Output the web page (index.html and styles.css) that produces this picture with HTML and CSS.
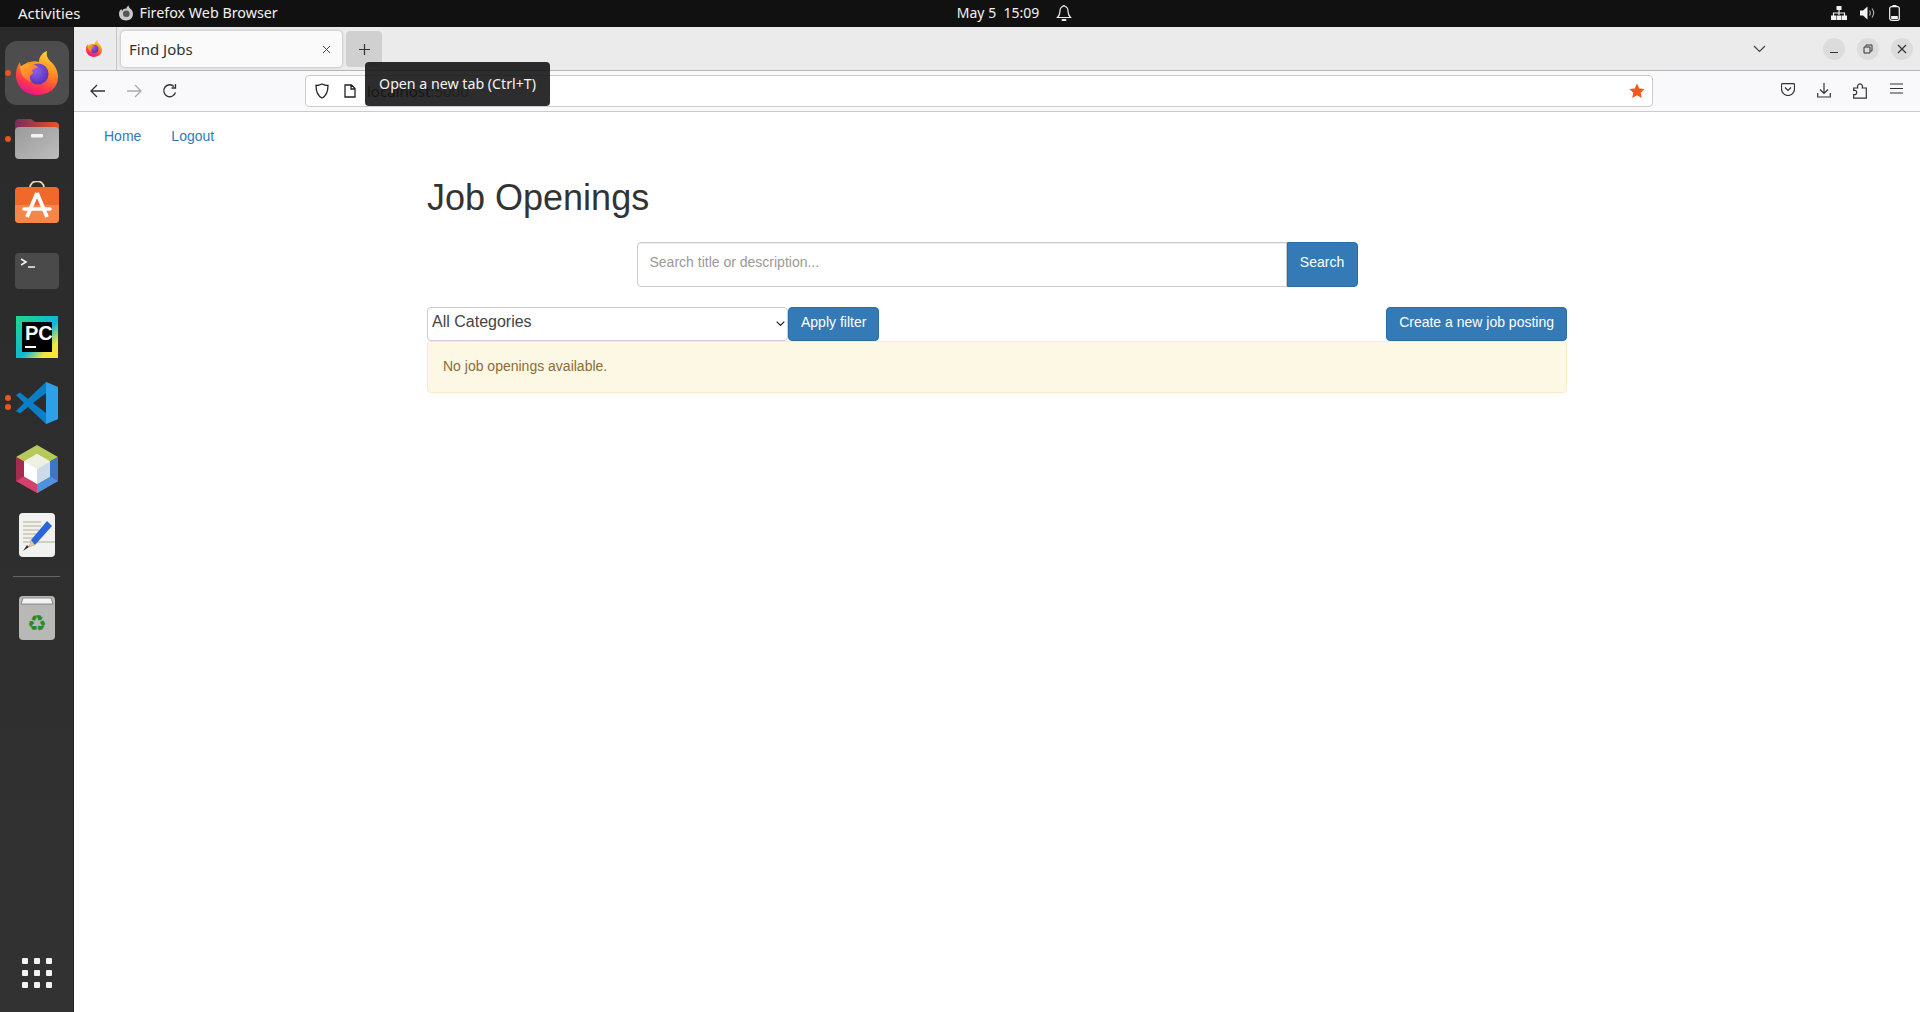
FILE: index.html
```html
<!DOCTYPE html>
<html>
<head>
	<meta charset="utf-8">
	<title>Find Jobs</title>
	<link rel="stylesheet" href="styles.css">
</head>
<body>
	<svg class="defs" width="0" height="0">
		<defs>
			<linearGradient id="fxBody" x1="0.7" y1="0" x2="0.3" y2="1">
				<stop offset="0" stop-color="#ffd53a"/>
				<stop offset="0.4" stop-color="#ff8a1f"/>
				<stop offset="0.75" stop-color="#ff3750"/>
				<stop offset="1" stop-color="#e3128c"/>
			</linearGradient>
			<linearGradient id="fxArm" x1="0" y1="0" x2="1" y2="1">
				<stop offset="0" stop-color="#ffb52e"/>
				<stop offset="1" stop-color="#ff5a2a"/>
			</linearGradient>
			<radialGradient id="fxBall" cx="0.4" cy="0.35" r="0.8">
				<stop offset="0" stop-color="#8f5fe8"/>
				<stop offset="1" stop-color="#4a2bb0"/>
			</radialGradient>
			<symbol id="firefox" viewBox="0 0 42 44">
				<path d="M21 44C9 44 0 35 0 24c0-5 1-9 4-13 0 2 1 4 2 5 2-3 5-5 8-5 3-1 6-1 9 0 0-5 3-9 8-11-1 3 0 7 3 10 5 4 8 10 8 16 0 11-9 18-21 18z" fill="url(#fxBody)"/>
				<circle cx="22" cy="23" r="10.5" fill="url(#fxBall)"/>
				<path d="M4 16c3-3 7-4 11-3 4 0 6 2 7 4-3 0-5 1-6 3 2 1 1 3-1 4-2 2-1 5 1 7-6-1-11-6-12-15z" fill="url(#fxArm)"/>
			</symbol>
			<linearGradient id="folderTop" x1="0" y1="0" x2="1" y2="0">
				<stop offset="0" stop-color="#7a2a5c"/>
				<stop offset="1" stop-color="#e4551f"/>
			</linearGradient>
			<linearGradient id="folderBody" x1="0" y1="0" x2="1" y2="1">
				<stop offset="0" stop-color="#9a9a9a"/>
				<stop offset="1" stop-color="#bdbdbd"/>
			</linearGradient>
			<linearGradient id="pcBg" x1="0" y1="0" x2="1" y2="1">
				<stop offset="0" stop-color="#21d789"/>
				<stop offset="0.55" stop-color="#0cb8d8"/>
				<stop offset="0.8" stop-color="#f5e642"/>
			</linearGradient>
		</defs>
	</svg>

	<header class="topbar">
		<div class="topbar-left">
			<span class="activities">Activities</span>
			<span class="app-menu">
				<svg class="app-menu-icon" viewBox="0 0 16 16"><path d="M8 15.500C3.800 15.500 1 12.600 1 9c0-2.500 1.200-4.200 2.500-5 0 1 .4 1.500.8 1.900C5 4 7 3.300 8.500 3.700 8.500 2.200 9.500.8 10.800.5c-.3 1.400.4 2.400 1.600 3.300 1.600 1.300 2.600 3 2.600 5.200 0 3.700-2.900 6.500-7 6.500z" fill="#c9c9c9"/><circle cx="8.300" cy="8.800" r="3.300" fill="#555"/></svg>
				Firefox Web Browser
			</span>
		</div>
		<div class="clock">
			<span>May 5&nbsp;&nbsp;15:09</span>
			<svg class="bell" viewBox="0 0 16 18"><path d="M8 1.500c-.6 0-1 .4-1 1C4.800 3 4 5 4 7c0 3-1 5-2.500 6.500h13C13 12 12 10 12 7c0-2-.8-4-3-4.500 0-.6-.4-1-1-1z" fill="none" stroke="#eee" stroke-width="1.200"/><rect x="5.500" y="15" width="5" height="2" rx="1" fill="#eee"/></svg>
		</div>
		<div class="tray">
			<svg width="16" height="14" viewBox="0 0 16 14"><path d="M5.500 0h5v4h-5zM0 9.500h5V14H0zM11 9.500h5V14h-5zM5.500 9.500h5V14h-5z" fill="#f2f2f2"/><path d="M8 4v5M2.500 10V7h11v3" fill="none" stroke="#f2f2f2" stroke-width="1.200"/></svg>
			<svg width="16" height="14" viewBox="0 0 16 14"><path d="M0 4.500h3L7.500.5v13L3 9.500H0z" fill="#f2f2f2"/><path d="M9.500 4.500c1 1.500 1 3.500 0 5M12 2.500c2 2.700 2 6.300 0 9" fill="none" stroke="#aaa" stroke-width="1.200"/></svg>
			<svg width="11" height="16" viewBox="0 0 11 16"><rect x=".7" y="1.700" width="9.600" height="13.600" rx="2" fill="none" stroke="#f2f2f2" stroke-width="1.200"/><rect x="3.500" y="0" width="4" height="1.500" fill="#f2f2f2"/><rect x="2.200" y="11" width="6.600" height="3" fill="#f2f2f2"/></svg>
		</div>
	</header>

	<div class="desktop">
		<nav class="dock">
			<div class="dock-slot dock-active">
				<span class="dock-dot"></span>
				<svg width="42" height="44"><use href="#firefox"/></svg>
			</div>
			<div class="dock-slot">
				<span class="dock-dot"></span>
				<svg width="44" height="40" viewBox="0 0 44 40">
					<path d="M0 4q0-4 4-4h12l4 3h20q4 0 4 4v12H0z" fill="url(#folderTop)"/>
					<rect y="8" width="44" height="32" rx="4" fill="url(#folderBody)"/>
					<rect x="16" y="15" width="12" height="3.500" rx="1" fill="#f2f2f2"/>
				</svg>
			</div>
			<div class="dock-slot dock-slot-store">
				<svg width="44" height="42" viewBox="0 0 44 42">
					<path d="M15 7c0-9 14-9 14 0" fill="none" stroke="#f3d6a8" stroke-width="1.800"/>
					<rect y="6" width="44" height="36" rx="4" fill="#f0692a"/>
					<path d="M0 24h44v14q0 4-4 4H4q-4 0-4-4z" fill="#f58645"/>
					<path d="M22 12L12 36M22 12l10 24" fill="none" stroke="#fff" stroke-width="3.800"/>
					<path d="M9 28h26" fill="none" stroke="#fff" stroke-width="3.500" stroke-linecap="round"/>
				</svg>
			</div>
			<div class="dock-slot">
				<svg width="44" height="36" viewBox="0 0 44 36">
					<rect width="44" height="36" rx="4" fill="#4a4a4a"/>
					<path d="M6 6l5 3-5 3M13 14h7" fill="none" stroke="#f2f2f2" stroke-width="1.600"/>
				</svg>
			</div>
			<div class="dock-slot">
				<svg width="42" height="42" viewBox="0 0 42 42">
					<rect width="42" height="42" fill="url(#pcBg)"/>
					<rect x="6" y="6" width="30" height="30" fill="#000"/>
					<text x="9" y="24" class="pc-text">PC</text>
					<rect x="9" y="30" width="11" height="2" fill="#fff"/>
				</svg>
			</div>
			<div class="dock-slot">
				<span class="dock-dot dock-dot-up"></span>
				<span class="dock-dot dock-dot-down"></span>
				<svg width="42" height="42" viewBox="0 0 42 42">
					<path d="M30 0L12 17 4 10.500 0 13l8 8-8 8 4 2.500 8-6.500L30 42l12-5V5zm0 11v20L17 21z" fill="#0a7fc7"/>
					<path d="M30 0l12 5v32l-12 5z" fill="#2da0e8"/>
				</svg>
			</div>
			<div class="dock-slot">
				<svg width="42" height="48" viewBox="0 0 42 48">
					<path d="M21 0l21 12-21 12L0 12z" fill="#b7c95a"/>
					<path d="M42 12v24L21 48V24z" fill="#3b78c4"/>
					<path d="M0 12v24l21 12V24z" fill="#a32c50"/>
					<path d="M0 36l21-12 21 12-21 12z" fill="#d6416b"/>
					<path d="M42 36l-21-12v24z" fill="#4c92dc"/>
					<path d="M21 9l13 7.500v15L21 39 8 31.500v-15z" fill="#fff"/>
					<path d="M21 9l13 7.500L21 24 8 16.500z" fill="#eef0e2"/>
					<path d="M34 16.500v15L21 39V24z" fill="#cddbe8"/>
				</svg>
			</div>
			<div class="dock-slot">
				<svg width="36" height="44" viewBox="0 0 36 44">
					<rect width="36" height="44" rx="4" fill="#f1f1ef"/>
					<path d="M4 9h18M4 13h18M4 17h16M4 21h14M4 25h12M4 29h32" stroke="#c9c3b3" stroke-width="1.500"/>
					<path d="M28 8l5 5-17 19-6 2 2-7z" fill="#2a66d8"/>
					<path d="M12 27l4 5-6 2z" fill="#eec48a"/>
					<path d="M4 38l6-4-2-2z" fill="#333"/>
				</svg>
			</div>
			<div class="dock-sep"></div>
			<div class="dock-slot">
				<svg width="36" height="44" viewBox="0 0 36 44">
					<rect width="36" height="44" rx="4" fill="#b8b8b6"/>
					<path d="M4 2h28l2 6H2z" fill="#f3f3f3" stroke="#777" stroke-width=".8"/>
					<text x="18" y="35" class="recycle">♻</text>
				</svg>
			</div>
			<div class="dock-slot dock-grid-slot">
				<div class="app-grid">
					<i></i><i></i><i></i><i></i><i></i><i></i><i></i><i></i><i></i>
				</div>
			</div>
		</nav>

		<div class="browser">
			<div class="tabbar">
				<div class="tab-firefox">
					<svg width="16" height="17"><use href="#firefox"/></svg>
				</div>
				<div class="tab">
					<span>Find Jobs</span>
					<svg class="tab-close" width="9" height="9" viewBox="0 0 9 9"><path d="M1 1l7 7M8 1L1 8" stroke="#444" stroke-width="1"/></svg>
				</div>
				<div class="newtab">
					<svg width="13" height="13" viewBox="0 0 13 13"><path d="M6.500 1v11M1 6.500h11" stroke="#333" stroke-width="1.200"/></svg>
				</div>
				<div class="tabbar-right">
					<svg class="tabs-menu" width="13" height="8" viewBox="0 0 13 8"><path d="M1 1l5.500 5.500L12 1" fill="none" stroke="#444" stroke-width="1.200"/></svg>
					<span class="winbtn"><svg width="10" height="10" viewBox="0 0 10 10"><path d="M1 8.500h8" stroke="#333" stroke-width="1"/></svg></span>
					<span class="winbtn"><svg width="10" height="10" viewBox="0 0 10 10"><path d="M3 2.500V1h6v6H7.500M1 3h6v6H1z" fill="none" stroke="#333" stroke-width="1"/></svg></span>
					<span class="winbtn"><svg width="10" height="10" viewBox="0 0 10 10"><path d="M1 1l8 8M9 1L1 9" stroke="#333" stroke-width="1.200"/></svg></span>
				</div>
			</div>

			<div class="toolbar">
				<div class="nav-buttons">
					<svg width="16" height="14" viewBox="0 0 16 14"><path d="M7 1L1 7l6 6M1 7h14" fill="none" stroke="#333" stroke-width="1.300"/></svg>
					<svg width="16" height="14" viewBox="0 0 16 14"><path d="M9 1l6 6-6 6M15 7H1" fill="none" stroke="#aaa" stroke-width="1.300"/></svg>
					<svg width="16" height="16" viewBox="0 0 16 16"><path d="M13.500 9.500A6 6 0 1 1 12 3.500M13.500 1v4h-4" fill="none" stroke="#333" stroke-width="1.300"/></svg>
				</div>
				<div class="urlbar">
					<svg width="14" height="16" viewBox="0 0 14 16"><path d="M7 1c2 1 4 1.500 6 1.500C13 9 11 13 7 15 3 13 1 9 1 2.500 3 2.500 5 2 7 1z" fill="none" stroke="#222" stroke-width="1.300"/></svg>
					<svg class="url-doc" width="12" height="14" viewBox="0 0 12 14"><path d="M1 1h6.500L11 4.500V13H1zM7 1v4h4" fill="none" stroke="#222" stroke-width="1.300"/></svg>
					<span class="url-text">localhost<span class="url-port">:5000</span></span>
					<svg class="url-star" width="16" height="16" viewBox="0 0 16 16"><path d="M8 .5l2.300 5 5.300.6-3.900 3.600 1.100 5.300L8 12.300 3.200 15l1.100-5.300L.4 6.100l5.300-.6z" fill="#f2591f"/></svg>
				</div>
				<div class="toolbar-icons">
					<span><svg width="14" height="13" viewBox="0 0 14 13"><path d="M1.500.7h11q1 0 1 1V6a6.500 6.500 0 0 1-13 0V1.700q0-1 1-1z" fill="none" stroke="#333" stroke-width="1.200"/><path d="M4 4.500l3 3 3-3" fill="none" stroke="#333" stroke-width="1.200"/></svg></span>
					<span><svg width="14" height="15" viewBox="0 0 14 15"><path d="M7 0v10M3 6.500l4 4 4-4M.7 10v4h12.600v-4" fill="none" stroke="#333" stroke-width="1.200"/></svg></span>
					<span><svg width="14" height="16" viewBox="0 0 14 16"><path d="M.7 5h4C4 3 5 .8 7 .8S10 3 9.300 5h4v10.200H.7v-3.700c2 .6 3-.6 3-2s-1-2.600-3-2z" fill="none" stroke="#333" stroke-width="1.200"/></svg></span>
					<span><svg width="13" height="11" viewBox="0 0 13 11"><path d="M0 1h13M0 5.500h13M0 10h13" stroke="#333" stroke-width="1.200"/></svg></span>
				</div>
			</div>

			<div class="tooltip">Open a new tab (Ctrl+T)</div>

			<main class="page">
				<ul class="nav-pills">
					<li><a href="#">Home</a></li>
					<li><a href="#">Logout</a></li>
				</ul>
				<div class="container">
					<h1>Job Openings</h1>
					<form class="search-form">
						<input class="search-input" type="text" placeholder="Search title or description...">
						<button class="btn btn-search" type="button">Search</button>
					</form>
					<div class="filter-row">
						<div class="filter-left">
							<div class="select-wrap">
								<select class="category-select">
									<option>All Categories</option>
								</select>
								<svg class="select-arrow" width="9" height="6" viewBox="0 0 9 6"><path d="M.7.7l3.800 3.800L8.300.7" fill="none" stroke="#222" stroke-width="1.200"/></svg>
							</div>
							<button class="btn" type="button">Apply filter</button>
						</div>
						<button class="btn" type="button">Create a new job posting</button>
					</div>
					<div class="alert">No job openings available.</div>
				</div>
			</main>
		</div>
	</div>
</body>
</html>
```

FILE: styles.css
```css
* {
	box-sizing: border-box;
}
html, body {
	margin: 0;
	height: 100%;
	overflow: hidden;
}
body {
	display: flex;
	flex-direction: column;
	font-family: 'Liberation Sans', Arial, sans-serif;
	font-size: 14px;
	line-height: 20px;
	color: #333;
	background-color: #fff;
}
.defs {
	position: absolute;
}

/* top bar */
.topbar {
	height: 27px;
	flex: none;
	background-color: #111;
	color: #f2f2f2;
	font-family: 'Noto Sans', sans-serif;
	font-size: 14.3px;
	display: grid;
	grid-template-columns: 1fr auto 1fr;
	align-items: center;
	padding: 0 20px 1px 18px;
}
.topbar-left {
	display: flex;
	align-items: center;
}
.activities {
	font-size: 15px;
	margin-right: 37px;
}
.app-menu {
	display: flex;
	align-items: center;
	gap: 6px;
}
.app-menu-icon {
	width: 16px;
	height: 16px;
}
.clock {
	display: flex;
	align-items: center;
	gap: 17px;
	margin-left: 111px;
	font-size: 14px;
}
.bell {
	width: 16px;
	height: 18px;
}
.tray {
	display: flex;
	align-items: center;
	justify-content: flex-end;
	gap: 13px;
}

/* dock */
.desktop {
	flex: 1;
	display: flex;
	min-height: 0;
}
.dock {
	width: 74px;
	flex: none;
	background: linear-gradient(#2a2a2a, #323232);
	border-right: 1px solid #222;
	display: flex;
	flex-direction: column;
	align-items: stretch;
	padding-top: 13px;
	padding-bottom: 6px;
}
.dock-slot {
	position: relative;
	height: 66px;
	display: flex;
	align-items: center;
	justify-content: center;
}
.dock-slot-store {
	padding-bottom: 6px;
}
.dock-active::before {
	content: "";
	position: absolute;
	left: 5px;
	top: 1px;
	width: 64px;
	height: 64px;
	border-radius: 12px;
	background-color: #4d4d4d;
}
.dock-active svg {
	position: relative;
}
.dock-dot {
	position: absolute;
	left: 5px;
	top: 30px;
	width: 6px;
	height: 6px;
	border-radius: 50%;
	background-color: #e95420;
}
.dock-dot-up {
	top: 25px;
}
.dock-dot-down {
	top: 34px;
}
.dock-sep {
	height: 1px;
	margin: 8px 13px;
	background-color: #666;
}
.dock-grid-slot {
	margin-top: auto;
}
.app-grid {
	display: grid;
	grid-template-columns: repeat(3, 6px);
	gap: 6px;
}
.app-grid i {
	width: 6px;
	height: 6px;
	border-radius: 1px;
	background-color: #f2f2f2;
}
.pc-text {
	font-family: 'Liberation Sans', sans-serif;
	font-weight: bold;
	font-size: 20px;
	fill: #fff;
}
.recycle {
	font-family: 'DejaVu Sans', sans-serif;
	font-size: 22px;
	fill: #2a8a2a;
	text-anchor: middle;
}

/* browser chrome */
.browser {
	position: relative;
	flex: 1;
	min-width: 0;
	display: flex;
	flex-direction: column;
}
.tabbar {
	height: 44px;
	flex: none;
	background-color: #ebebeb;
	border-bottom: 1px solid #b5b5b5;
	display: flex;
	align-items: flex-start;
	font-family: 'Noto Sans', sans-serif;
}
.tab-firefox {
	width: 43px;
	height: 43px;
	border-right: 1px solid #c4c4c4;
	display: flex;
	align-items: center;
	justify-content: center;
	padding-right: 2px;
}
.tab {
	width: 221px;
	height: 36px;
	margin: 4px 4px 0 4px;
	padding: 0 11px 0 8px;
	background-color: #fafafa;
	border-radius: 4px;
	box-shadow: 0 0 3px rgba(0, 0, 0, 0.3);
	display: flex;
	align-items: center;
	justify-content: space-between;
	font-size: 15px;
	color: #333;
}
.newtab {
	width: 36px;
	height: 36px;
	margin-top: 4px;
	border-radius: 4px;
	background-color: #d0d0d0;
	display: flex;
	align-items: center;
	justify-content: center;
}
.tabbar-right {
	margin-left: auto;
	display: flex;
	align-items: center;
	height: 43px;
	padding-right: 7px;
	gap: 12px;
}
.tabs-menu {
	margin-right: 45px;
}
.winbtn {
	width: 22px;
	height: 22px;
	border-radius: 50%;
	background-color: #dcdcdc;
	display: flex;
	align-items: center;
	justify-content: center;
}
.toolbar {
	height: 41px;
	flex: none;
	background-color: #f9f9fb;
	border-bottom: 1px solid #ccc;
	display: flex;
	align-items: center;
}
.nav-buttons {
	width: 231px;
	flex: none;
	display: flex;
	align-items: center;
	gap: 20px;
	padding-left: 16px;
}
.urlbar {
	width: 1348px;
	height: 32px;
	flex: none;
	background-color: #fff;
	border: 1px solid #ccc;
	border-radius: 4px;
	display: flex;
	align-items: center;
	padding: 0 7px 0 9px;
	font-family: 'Noto Sans', sans-serif;
	font-size: 15px;
	color: #111;
}
.url-doc {
	margin-left: 15px;
}
.url-text {
	margin-left: 11px;
}
.url-port {
	color: #777;
}
.url-star {
	margin-left: auto;
}
.toolbar-icons {
	flex: 1;
	display: flex;
	justify-content: flex-end;
	padding-right: 6px;
}
.toolbar-icons span {
	width: 36px;
	display: flex;
	justify-content: center;
}
.tooltip {
	position: absolute;
	left: 291px;
	top: 35px;
	width: 185px;
	height: 44px;
	padding-bottom: 1px;
	border-radius: 4px;
	background-color: rgba(22, 22, 22, 0.9);
	color: #f4f4f4;
	font-family: 'Noto Sans', sans-serif;
	font-size: 14.2px;
	display: flex;
	align-items: center;
	justify-content: center;
}

/* page content */
.page {
	flex: 1;
	background-color: #fff;
	padding-top: 4px;
}
.nav-pills {
	list-style: none;
	margin: 0;
	padding: 0 0 0 15px;
	display: flex;
}
.nav-pills a {
	display: block;
	padding: 10px 15px;
	color: #337ab7;
	text-decoration: none;
}
.container {
	width: 1170px;
	margin: 0 auto;
	padding: 0 15px;
}
h1 {
	font-size: 36px;
	font-weight: 500;
	line-height: 1.1;
	margin: 22px 0 10px;
	color: #333;
}
.search-form {
	display: flex;
	justify-content: center;
	margin-top: 24px;
	margin-bottom: 20px;
}
.search-input {
	width: 650px;
	height: 45px;
	padding: 0 12px 4px;
	border: 1px solid #ccc;
	border-radius: 4px 0 0 4px;
	font-family: inherit;
	font-size: 14px;
	box-shadow: inset 0 1px 1px rgba(0, 0, 0, 0.075);
}
.search-input::placeholder {
	color: #999;
}
.btn {
	height: 34px;
	padding: 0 12px 3px;
	border: 1px solid #2e6da4;
	border-radius: 4px;
	background-color: #337ab7;
	color: #fff;
	font-family: inherit;
	font-size: 14px;
}
.btn-search {
	height: 45px;
	width: 71px;
	padding-bottom: 4px;
	border-radius: 0 4px 4px 0;
}
.filter-row {
	display: flex;
	justify-content: space-between;
}
.filter-left {
	display: flex;
}
.select-wrap {
	position: relative;
	width: 361px;
}
.category-select {
	width: 100%;
	height: 34px;
	appearance: none;
	padding: 0 4px 5px;
	border: 1px solid #ccc;
	border-radius: 4px;
	background-color: #fff;
	color: #444;
	font-family: inherit;
	font-size: 16px;
}
.select-arrow {
	position: absolute;
	right: 3px;
	top: 14px;
}
.alert {
	padding: 14px 15px 16px;
	border: 1px solid #faebcc;
	border-radius: 4px;
	background-color: #fcf8e3;
	color: #8a6d3b;
}
```
